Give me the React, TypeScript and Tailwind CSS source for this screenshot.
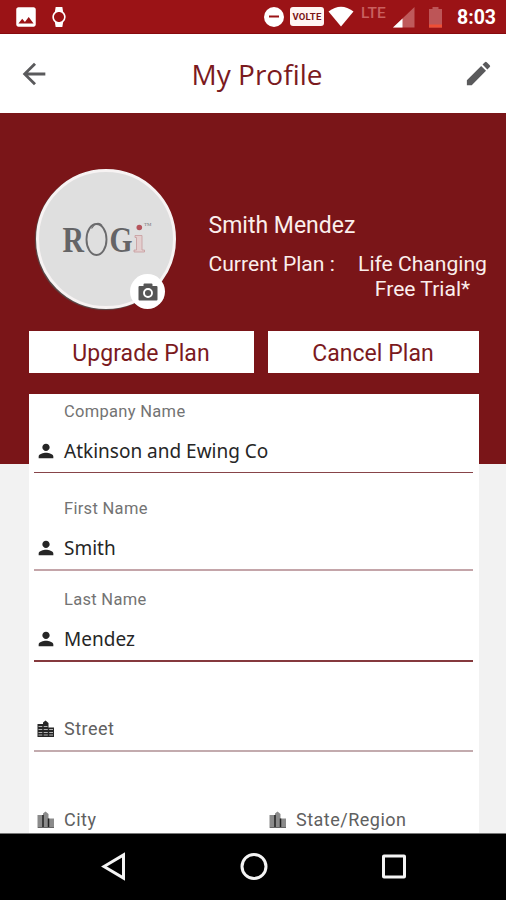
import type { ReactNode } from "react";
import {
  MdArrowBack,
  MdEdit,
  MdImage,
  MdPerson,
  MdWatch,
} from "react-icons/md";

/**
 * Status bar
 */
function StatusBar() {
  return (
    <div className="h-[34px] shrink-0 flex items-center bg-[#9b1316] border-b border-[#870a0e] text-white">
      <MdImage className="ml-[13px] size-[26px]" />
      <MdWatch className="ml-[10px] size-[20px]" />

      <div className="ml-auto flex items-center pr-[10px]">
        <svg className="w-[22px] h-[22px]" viewBox="0 0 22 22">
          <circle cx="10" cy="11" r="10" fill="#fff" />
          <path d="M5 10.500h10" stroke="#9b1316" strokeWidth="2" />
        </svg>
        <span className="ml-[4px] mr-px w-[34px] h-[19px] rounded-[3px] bg-[#fff5f3] text-[#7b1416] text-[9.500px] leading-[19px] text-center font-bold tracking-[0.200px]">
          VOLTE
        </span>
        <svg className="ml-[3px] mr-[2px] w-[26px] h-[21px]" viewBox="0 0 26 21">
          <path d="M.5 5.500Q13-4 25.500 5.500L13 20.500Z" fill="#fff" />
        </svg>
        <span className="ml-[5px] mr-[2px] mb-[7px] w-[27px] text-[15.500px] leading-[14px] font-medium text-[#c9605f]">
          LTE
        </span>
        <svg className="ml-[3px] w-[22px] h-[22px]" viewBox="0 0 22 22">
          <path d="M21.500 1V21.500H0Z" fill="#bf5a5b" />
          <path d="M9.500 12.500V21.500H0Z" fill="#fff" />
        </svg>
        <svg className="ml-[13px] mr-px w-[15px] h-[22px]" viewBox="0 0 15 22">
          <path d="M4.500 1h6v2H14v18.500H1V3h3.500Z" fill="#bd5557" />
          <path d="M1 18.500h13v3H1Z" fill="#ee4f35" />
        </svg>
        <span className="mt-[3px] ml-[13px] w-[39px] text-[19.500px] font-bold leading-[22px] whitespace-nowrap">
          8:03
        </span>
      </div>
    </div>
  );
}

/**
 * Brand logo shown inside the avatar
 */
function Logo() {
  return (
    <svg className="ml-[2px] w-[92px] h-[40px]" viewBox="0 0 92 40" fontFamily="Liberation Serif, serif">
      <text x="1.500" y="33" fontSize="35.500" fontWeight="bold" fill="#646466" textLength="21.500" lengthAdjust="spacingAndGlyphs">
        R
      </text>
      <ellipse cx="35.500" cy="20.500" rx="10" ry="15.500" fill="none" stroke="#6b6b6d" strokeWidth="1.900" />
      <path d="M30.500 9.500Q36 1 41 6.500" fill="none" stroke="#6b6b6d" strokeWidth="1.200" />
      <text x="48.500" y="33" fontSize="35.500" fontWeight="bold" fill="#646466" textLength="23" lengthAdjust="spacingAndGlyphs">
        G
      </text>
      <path d="M74 16.500h7V31h2.500v2H73v-2h2.500V18.500H74Z" fill="#e3cfcf" stroke="#c79a9c" strokeWidth=".8" />
      <circle cx="78.300" cy="8.500" r="2.800" fill="#b5545c" />
      <text x="83" y="7" fontSize="5" fill="#77777a">
        TM
      </text>
    </svg>
  );
}

function CameraIcon() {
  return (
    <svg className="w-[20px] h-[18px]" viewBox="0 0 20 18">
      <path d="M1.500 3H5.500V1.500Q5.500.5 6.500.5h7q1 0 1 1V3h4q1 0 1 1v12.500q0 1-1 1h-17q-1 0-1-1V4q0-1 1-1Z" fill="#565656" />
      <circle cx="10" cy="10" r="4" fill="none" stroke="#fff" strokeWidth="1.900" />
    </svg>
  );
}

function StreetIcon() {
  return (
    <svg className="w-[18px] h-[18px]" viewBox="0 0 18 18">
      <path d="M.5 4H6V2.500L8.500.5 11.500 3v4.500H17V17H.5Z" fill="#262626" />
      <path d="M1.500 6.500h9M1.500 9.500h14.500M1.500 12.500h14.500M1.500 15h14.500" stroke="#c4c4c4" strokeWidth=".9" />
      <path d="M6 4v13M11.500 8v9" stroke="#262626" strokeWidth="1.400" />
    </svg>
  );
}

function CityIcon() {
  return (
    <svg className="w-[18px] h-[18px]" viewBox="0 0 18 18">
      <path d="M.5 4H6V2.500L8.500.5 11.500 3v4.500H17V17H.5Z" fill="#8b8b8b" />
      <path d="M6 4V17M11.500 7.500V17" stroke="#222" strokeWidth="1.500" />
      <path d="M1 16.500h16" stroke="#666" strokeWidth="1" />
    </svg>
  );
}

/**
 * Filled field: label on top, icon + value, underline
 */
function Field({ label, value, className }: { label: string; value: string; className: string }) {
  return (
    <div className={`flex flex-col ${className}`}>
      <label className="mt-px pl-[30px] text-[16.500px] leading-[20px] tracking-[0.300px] text-[#737373]">
        {label}
      </label>
      <div className="mt-auto mb-[9px] flex items-center">
        <MdPerson className="ml-[1px] mb-px size-[22px] text-[#262626]" />
        <span className="ml-[7px] font-['Noto_Sans'] text-[19px] leading-[24px] text-[#262626]">
          {value}
        </span>
      </div>
    </div>
  );
}

function EmptyField({ icon, label }: { icon: ReactNode; label: string }) {
  return (
    <div className="flex items-center pl-[3px] gap-[9px] text-[18px] leading-[22px] tracking-[0.500px] text-[#606060]">
      {icon}
      {label}
    </div>
  );
}

export default function App() {
  return (
    <main className="w-[506px] h-[900px] flex flex-col overflow-hidden bg-[#f2f2f2] font-['Roboto',sans-serif]">

      <StatusBar />

      {/* APP BAR */}
      <header className="h-[79px] shrink-0 flex items-center justify-between bg-white pl-[17px] pr-[12px] text-[#5a5a5c]">
        <MdArrowBack className="size-[34px]" />
        <h1 className="font-['Open_Sans'] text-[28px] leading-[36px] text-[#7b1a1e]">
          My Profile
        </h1>
        <MdEdit className="size-[31px]" />
      </header>

      {/* CONTENT */}
      <div className="flex-1 min-h-0 overflow-hidden">

        <section className="h-[351px] bg-[#7a1518]">
          <div className="flex pt-[56px] pl-[36px]">
            <div className="relative size-[140px] shrink-0 rounded-full border-[3px] border-[#f7f3f3] bg-[#dfdfdf] flex items-center justify-center shadow-[-1px_1px_1px_#55504f]">
              <Logo />
              <div className="absolute left-[91px] top-[102px] size-[35px] rounded-full bg-white flex items-center justify-center">
                <CameraIcon />
              </div>
            </div>

            <div className="pl-[32.500px] pt-[44px] text-[#fbeeec]">
              <p className="text-[23px] leading-[26px]">Smith Mendez</p>
              <div className="mt-[12px] flex text-[21.100px] leading-[25px]">
                <p className="w-[148px] whitespace-nowrap">Current Plan :</p>
                <p className="w-[132px] text-center whitespace-nowrap">
                  Life Changing
                  <br />
                  Free Trial*
                </p>
              </div>
            </div>
          </div>

          <div className="mt-[22px] ml-[28.500px] flex gap-[14px] text-[23px] text-[#7b1a1e]">
            <button className="w-[225px] h-[42px] pt-[4px] bg-white tracking-[0.050px]">Upgrade Plan</button>
            <button className="w-[211px] h-[42px] pt-[4px] bg-white tracking-[0.050px]">Cancel Plan</button>
          </div>
        </section>

        {/* FORM */}
        <form className="relative -mt-[70px] ml-[28.500px] w-[450px] h-[440px] bg-white px-[5.500px] pt-[7px]">
          <Field label="Company Name" value="Atkinson and Ewing Co" className="h-[72px] border-b-[1.500px] border-[#874449]" />
          <Field label="First Name" value="Smith" className="mt-[25px] h-[73px] border-b-2 border-[#c4a5a9]" />
          <Field label="Last Name" value="Mendez" className="mt-[18px] h-[73px] border-b-2 border-[#85393d]" />

          <div className="mt-[56px] h-[34px] border-b-2 border-[#c3abae]">
            <EmptyField icon={<StreetIcon />} label="Street" />
          </div>

          <div className="mt-[57px] grid grid-cols-[232px_1fr]">
            <EmptyField icon={<CityIcon />} label="City" />
            <EmptyField icon={<CityIcon />} label="State/Region" />
          </div>
        </form>

      </div>

      {/* NAVIGATION BAR */}
      <nav className="h-[67px] shrink-0 bg-black border-t border-[#777] flex items-center justify-center gap-[112px] pl-px">
        <svg className="w-[28px] h-[30px]" viewBox="0 0 28 30" fill="none" stroke="#f4f4f4" strokeWidth="3">
          <path d="M4 14.500L23.500 3V26Z" />
        </svg>
        <svg className="w-[28px] h-[30px]" viewBox="0 0 28 30" fill="none" stroke="#f4f4f4" strokeWidth="3">
          <circle cx="14" cy="14.500" r="12" />
        </svg>
        <svg className="w-[28px] h-[30px]" viewBox="0 0 28 30" fill="none" stroke="#f4f4f4" strokeWidth="3">
          <rect x="3.500" y="4" width="21" height="21" rx=".5" />
        </svg>
      </nav>

    </main>
  );
}
